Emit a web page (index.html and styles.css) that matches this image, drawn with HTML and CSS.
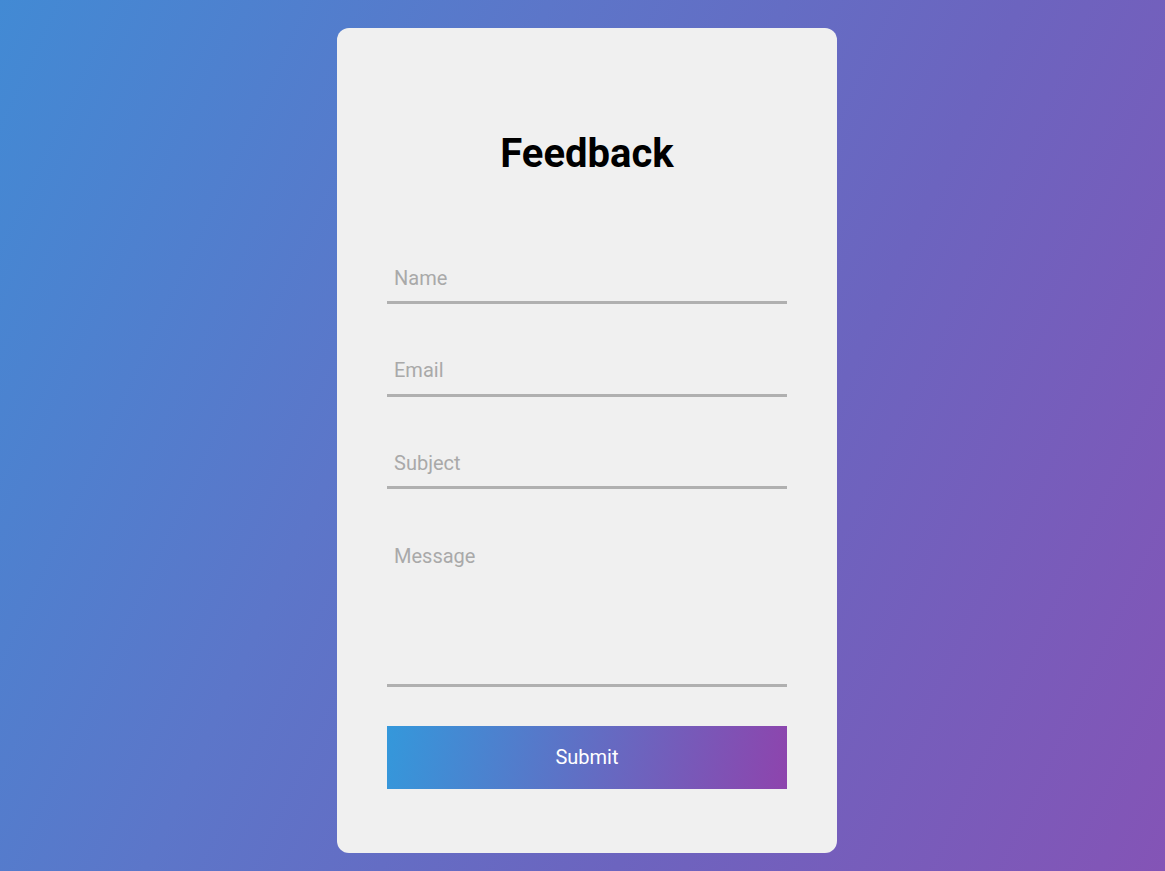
FILE: index.html
```html
<!DOCTYPE html>
<html lang="en">
<head>
<meta charset="utf-8">
<title>Feedback</title>
<link rel="stylesheet" href="styles.css">
</head>
<body>
<main class="card">
  <h1 class="title">Feedback</h1>
  <form class="form">
    <input class="field" type="text" placeholder="Name">
    <input class="field" type="email" placeholder="Email">
    <input class="field" type="text" placeholder="Subject">
    <textarea class="field area" placeholder="Message"></textarea>
    <button class="submit" type="button">Submit</button>
  </form>
</main>
</body>
</html>
```
FILE: styles.css
```css
html, body {
  margin: 0;
  padding: 0;
}
body {
  min-height: 871px;
  background: linear-gradient(115deg, #428ad4 0%, #5c76c9 35%, #6c64bf 65%, #8454b6 100%);
  font-family: Roboto, "Liberation Sans", sans-serif;
  display: flex;
  justify-content: center;
  align-items: flex-start;
  padding: 28px 0 0 9px;
  box-sizing: border-box;
}
.card {
  width: 500px;
  height: 825px;
  box-sizing: border-box;
  background: #f0f0f0;
  border-radius: 12px;
  padding: 50px;
}
.title {
  margin: 52px 0 81px;
  font-size: 40px;
  font-weight: 700;
  line-height: 47px;
  text-align: center;
  color: #000;
}
.form {
  display: flex;
  flex-direction: column;
}
.field {
  display: block;
  width: 100%;
  box-sizing: border-box;
  height: 46px;
  margin: 0 0 46.5px;
  padding: 8px 7px 12px;
  border: none;
  border-bottom: 3px solid #b0b0b0;
  background: transparent;
  font-family: Roboto, "Liberation Sans", sans-serif;
  font-size: 20px;
  color: #333;
  outline: none;
}
.field::placeholder {
  color: #a9a9a9;
}
.area {
  height: 151px;
  margin-bottom: 39px;
  resize: none;
}
.submit {
  height: 63px;
  border: none;
  background: linear-gradient(100deg, #3498db, #8e44ad);
  color: #fff;
  font-family: Roboto, "Liberation Sans", sans-serif;
  font-size: 20px;
  cursor: pointer;
}
```
